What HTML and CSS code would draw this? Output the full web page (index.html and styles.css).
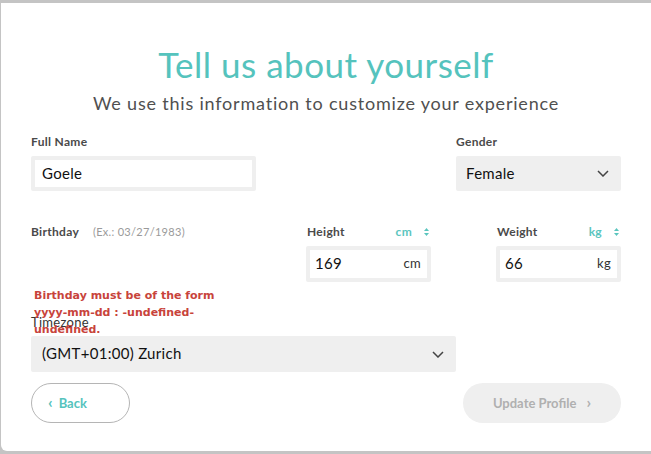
FILE: index.html
```html
<!DOCTYPE html>
<html lang="en">
<head>
    <meta charset="UTF-8">
    <meta name="viewport" content="width=device-width, initial-scale=1.0">
    <title>Tell us about yourself</title>
    <link rel="stylesheet" href="styles.css">
</head>
<body>
    <div class="modal">
        <h1>Tell us about yourself</h1>
        <p class="subtitle">We use this information to customize your experience</p>

        <div class="row row-top">
            <div class="field field-name">
                <label>Full Name</label>
                <div class="text-input">Goele</div>
            </div>
            <div class="field field-gender">
                <label>Gender</label>
                <div class="select">
                    <span>Female</span>
                    <svg class="chevron" width="12" height="7" viewBox="0 0 12 7"><polyline points="1,1 6,6 11,1" fill="none" stroke="#444" stroke-width="1.5"/></svg>
                </div>
            </div>
        </div>

        <div class="row row-body">
            <div class="field field-birthday">
                <label>Birthday <span class="hint">(Ex.: 03/27/1983)</span></label>
                <div class="error">Birthday must be of the form yyyy-mm-dd : -undefined-undefined.</div>
            </div>
            <div class="field field-measure">
                <div class="label-row">
                    <label>Height</label>
                    <span class="unit">cm
                        <svg width="5" height="8" viewBox="0 0 5 8"><polygon points="2.5,0 5,3 0,3" fill="#5bc5be"/><polygon points="0,5 5,5 2.5,8" fill="#5bc5be"/></svg>
                    </span>
                </div>
                <div class="text-input measure-input"><span>169</span><span class="suffix">cm</span></div>
            </div>
            <div class="field field-measure">
                <div class="label-row">
                    <label>Weight</label>
                    <span class="unit">kg
                        <svg width="5" height="8" viewBox="0 0 5 8"><polygon points="2.5,0 5,3 0,3" fill="#5bc5be"/><polygon points="0,5 5,5 2.5,8" fill="#5bc5be"/></svg>
                    </span>
                </div>
                <div class="text-input measure-input"><span>66</span><span class="suffix">kg</span></div>
            </div>
        </div>

        <div class="field field-timezone">
            <label class="plain">Timezone</label>
            <div class="select select-wide">
                <span>(GMT+01:00) Zurich</span>
                <svg class="chevron" width="12" height="7" viewBox="0 0 12 7"><polyline points="1,1 6,6 11,1" fill="none" stroke="#444" stroke-width="1.5"/></svg>
            </div>
        </div>

        <div class="actions">
            <button class="btn-back">&lsaquo;<span>Back</span></button>
            <button class="btn-update">Update Profile<span>&rsaquo;</span></button>
        </div>
    </div>
</body>
</html>
```

FILE: styles.css
```css
body {
    margin: 0;
    background-color: #c4c4c4;
    font-family: Lato, "Open Sans", sans-serif;
    letter-spacing: 0.3px;
    overflow: hidden;
}
.modal {
    margin: 3px 0 0 1px;
    height: 448px;
    background: #ffffff;
    border-radius: 0 0 0 6px;
    padding: 39px 30px 0 30px;
    box-sizing: border-box;
}
h1 {
    margin: 0;
    text-align: center;
    font-size: 35px;
    line-height: 44px;
    font-weight: 400;
    letter-spacing: 0.5px;
    color: #55c3bd;
}
.subtitle {
    margin: 5px 0 0 0;
    text-align: center;
    font-size: 18px;
    line-height: 24px;
    letter-spacing: 0.8px;
    color: #505050;
}
.row {
    display: flex;
}
.row-top {
    margin-top: 19px;
    justify-content: space-between;
}
.row-body {
    margin-top: 33px;
}
label {
    display: block;
    font-size: 12px;
    line-height: 16px;
    font-weight: 700;
    color: #4a4a4a;
}
label.plain {
    font-weight: 400;
    font-size: 13px;
    color: #333;
}
.hint {
    margin-left: 11px;
    font-weight: 400;
    font-size: 11px;
    color: #9a9a9a;
}
.field-name {
    width: 225px;
}
.field-gender {
    width: 165px;
}
.text-input {
    margin-top: 6px;
    height: 35px;
    box-sizing: border-box;
    border: 4px solid #efefef;
    border-radius: 2px;
    padding: 0 7px;
    font-size: 15px;
    line-height: 27px;
    color: #111;
}
.select {
    margin-top: 6px;
    height: 35px;
    box-sizing: border-box;
    background: #efefef;
    border-radius: 2px;
    padding: 0 12px 0 10px;
    display: flex;
    align-items: center;
    justify-content: space-between;
    font-size: 15px;
    line-height: 20px;
    color: #111;
}
.select span {
    margin-top: -2px;
}
.select-wide {
    height: 36px;
    padding-left: 11px;
}
.field-birthday {
    width: 275px;
    position: relative;
}
.error {
    position: absolute;
    top: 63px;
    left: 3px;
    width: 200px;
    font-family: "DejaVu Sans", Verdana, sans-serif;
    font-size: 11px;
    line-height: 17px;
    font-weight: 700;
    letter-spacing: 0;
    color: #c8433b;
}
.field-measure {
    width: 125px;
}
.field-measure + .field-measure {
    margin-left: 65px;
}
.label-row {
    display: flex;
    justify-content: space-between;
    padding: 0 2px 0 1px;
}
.unit {
    font-size: 12px;
    line-height: 16px;
    font-weight: 700;
    color: #5bc5be;
    display: flex;
    align-items: center;
    gap: 12px;
}
.measure-input {
    height: 36px;
    display: flex;
    justify-content: space-between;
    padding: 0 6px 0 5px;
}
.suffix {
    font-size: 13px;
    color: #333;
}
.field-timezone {
    width: 425px;
    margin-top: 32px;
}
.actions {
    margin-top: 11px;
    display: flex;
    justify-content: space-between;
}
button {
    height: 40px;
    border-radius: 20px;
    font-family: Lato, "Open Sans", sans-serif;
    font-size: 13px;
    font-weight: 700;
    line-height: 16px;
    padding-bottom: 3px;
    cursor: pointer;
}
.btn-back {
    width: 99px;
    border: 1px solid #b5b5b5;
    background: #fff;
    color: #55c3bd;
    text-align: left;
    padding-left: 16px;
    font-size: 16px;
}
.btn-back span {
    font-size: 13px;
    margin-left: 6px;
}
.btn-update {
    width: 158px;
    border: none;
    background: #efefef;
    color: #b0b0b0;
}
.btn-update span {
    margin-left: 10px;
    font-size: 16px;
}
```
